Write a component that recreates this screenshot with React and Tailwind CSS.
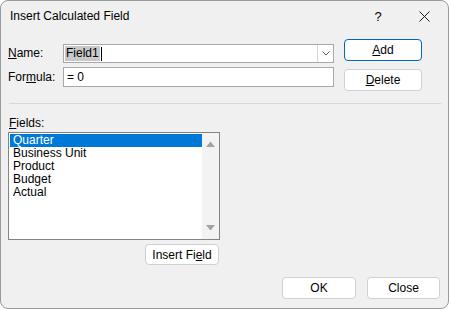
import React from 'react';

const font = { fontFamily: '"Liberation Sans", Arial, sans-serif' };

const Btn = ({ children, className = '', primary = false }) => (
  <button
    className={`flex items-center justify-center bg-white border rounded-[4px] text-[12px] text-black ${
      primary ? 'border-[#0067c0]' : 'border-[#d0d0d0]'
    } ${className}`}
  >
    {children}
  </button>
);

const App = () => {
  const fields = ['Quarter', 'Business Unit', 'Product', 'Budget', 'Actual'];

  return (
    <div className="w-[449px] h-[309px] bg-white" style={font}>
      <div className="w-[449px] h-[309px] bg-[#f0f0f0] border border-[#9a9a9a] rounded-[8px] flex flex-col text-[12px] text-black overflow-hidden">
        {/* title bar */}
        <div className="h-[31px] flex items-center pl-[9px] shrink-0">
          <span className="flex-1 leading-[15px]">Insert Calculated Field</span>
          <span className="w-[10px] text-[13px] mr-[36px] text-center">?</span>
          <svg width="11" height="11" viewBox="0 0 11 11" className="mr-[18px]">
            <path d="M0.5 0.5 L10.5 10.5 M10.5 0.5 L0.5 10.5" stroke="#1a1a1a" strokeWidth="1" />
          </svg>
        </div>

        <div className="flex-1 flex flex-col pl-[7px] pr-[6px]">
          {/* name / formula + buttons */}
          <div className="flex">
            <div className="w-[326px] flex flex-col">
              <div className="flex items-center mt-[12px] h-[19px]">
                <span className="w-[55px] leading-[15px]">
                  <span className="underline underline-offset-1">N</span>ame:
                </span>
                <div className="flex-1 h-[19px] bg-white border border-[#a8a8a8] flex items-center">
                  <div className="flex-1 flex items-center pl-[1px]">
                    <span className="bg-[#c8c8c8] leading-[15px] px-[1px]">Field1</span>
                    <span className="w-[1px] h-[14px] bg-black ml-[1px]"></span>
                  </div>
                  <div className="w-[16px] h-full border-l border-[#d6d6d6] flex items-center justify-center">
                    <svg width="8" height="5" viewBox="0 0 8 5">
                      <path d="M0.5 0.5 L4 4 L7.5 0.5" stroke="#606060" fill="none" strokeWidth="1" />
                    </svg>
                  </div>
                </div>
              </div>
              <div className="flex items-center mt-[4px] h-[20px]">
                <span className="w-[55px] leading-[15px]">
                  For<span className="underline underline-offset-1">m</span>ula:
                </span>
                <div className="flex-1 h-[20px] bg-white border border-[#a8a8a8] flex items-center pl-[3px]">
                  = 0
                </div>
              </div>
            </div>
            <div className="flex flex-col ml-[10px] mt-[7px] gap-[8px]">
              <Btn primary className="w-[78px] h-[22px]">
                <span className="underline underline-offset-1">A</span>dd
              </Btn>
              <Btn className="w-[78px] h-[22px]">
                <span className="underline underline-offset-1">D</span>elete
              </Btn>
            </div>
          </div>

          {/* separator */}
          <div className="mt-[12px] h-[1px] bg-[#d8d8d8] ml-[1px] mr-[1px]"></div>

          {/* fields */}
          <div className="mt-[12px] ml-[1px] leading-[15px]">
            <span className="underline underline-offset-1">F</span>ields:
          </div>
          <div className="w-[212px] flex flex-col">
            <div className="mt-[1px] w-[212px] h-[108px] bg-white border border-[#848484] flex">
              <div className="flex-1 pt-[1px] pl-[1px]">
                {fields.map((f, i) => (
                  <div
                    key={f}
                    className={`h-[13px] leading-[13px] pl-[3px] ${i === 0 ? 'bg-[#0078d7] text-white' : ''}`}
                  >
                    {f}
                  </div>
                ))}
              </div>
              <div className="w-[17px] bg-[#f3f3f3] flex flex-col items-center justify-between py-[8px]">
                <svg width="9" height="6" viewBox="0 0 9 6">
                  <path d="M0 6 L4.5 0.5 L9 6 Z" fill="#a3a3a3" />
                </svg>
                <svg width="9" height="6" viewBox="0 0 9 6">
                  <path d="M0 0 L4.5 5.5 L9 0 Z" fill="#a3a3a3" />
                </svg>
              </div>
            </div>
            <Btn className="self-end mr-[1px] mt-[4px] w-[74px] h-[21px]">
              Insert Fi<span className="underline underline-offset-1">e</span>ld
            </Btn>
          </div>

          {/* ok / close */}
          <div className="flex justify-end gap-[11px] mt-[12px] pr-[2px]">
            <Btn className="w-[74px] h-[22px]">OK</Btn>
            <Btn className="w-[73px] h-[22px]">Close</Btn>
          </div>
        </div>
      </div>
    </div>
  );
};

export default App;
